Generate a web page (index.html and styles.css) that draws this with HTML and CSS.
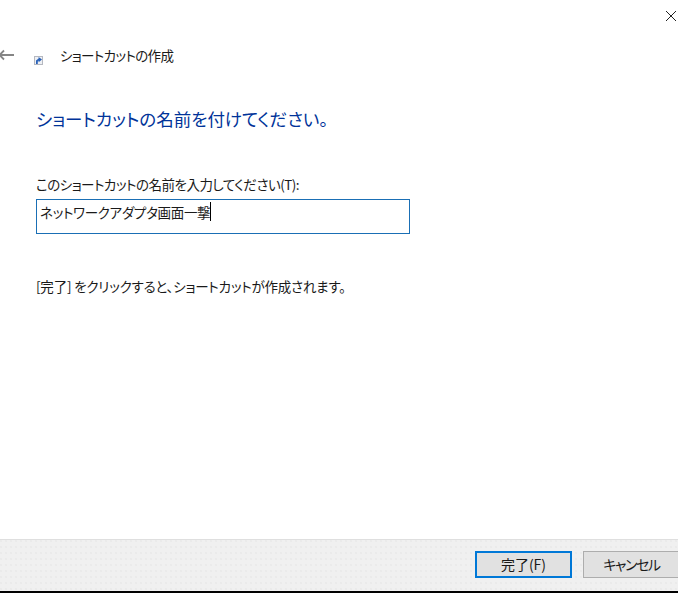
FILE: index.html
```html
<!DOCTYPE html>
<html lang="ja">
<head>
<meta charset="utf-8">
<title>ショートカットの作成</title>
<link rel="stylesheet" href="styles.css">
</head>
<body>
<div class="window">
  <div class="close-row">
    <svg class="close" width="12" height="12" viewBox="0 0 12 12"><path d="M1 1L11 11M11 1L1 11" stroke="#222" stroke-width="1" fill="none"/></svg>
  </div>
  <div class="title-row">
    <svg class="back" width="14" height="12" viewBox="0 0 14 12"><path d="M14 6H0M4 1.5L-0.5 6L4 10.5" stroke="#858585" stroke-width="1.8" fill="none"/></svg>
    <svg class="app-icon" width="9" height="9" viewBox="0 0 9 9"><rect x="0.5" y="0.5" width="8" height="8" fill="#eef0f4" stroke="#b5b8c0"/><path d="M2 8V4.5L4.6 2.6V1L8 3.6L4.6 6.2V4.6L3.8 5.4V8Z" fill="#2a62b8"/></svg>
    <span class="title">ショートカットの作成</span>
  </div>
  <main class="content">
    <h1 class="heading">ショートカットの名前を付けてください。</h1>
    <label class="field-label" for="name">このショートカットの名前を入力してください(T):</label>
    <div class="input" id="name"><span>ネットワークアダプタ画面一撃</span><i class="caret"></i></div>
    <p class="hint">[完了] をクリックすると、ショートカットが作成されます。</p>
  </main>
  <footer class="footer">
    <button class="btn primary">完了(F)</button>
    <button class="btn cancel">キャンセル</button>
  </footer>
</div>
</body>
</html>
```
FILE: styles.css
```css
* { box-sizing: border-box; }
html, body { margin: 0; padding: 0; }
body {
  width: 678px;
  height: 593px;
  overflow: hidden;
  background: #fff;
  font-family: "Noto Sans CJK JP", "Liberation Sans", sans-serif;
  font-feature-settings: "palt";
  color: #1a1a1a;
  font-size: 13.5px;
}
.window {
  height: 593px;
  display: flex;
  flex-direction: column;
  border-bottom: 2px solid #000;
  overflow: hidden;
}
.close-row {
  height: 45px;
  display: flex;
  justify-content: flex-end;
  align-items: flex-start;
  padding: 10px 0 0 0;
}
.close { margin-right: 1px; }
.title-row {
  height: 22px;
  display: flex;
  align-items: center;
}
.back { margin-top: -2px; }
.app-icon { margin-left: 20px; margin-top: 8px; }
.title {
  margin-left: 17px;
  font-size: 13.5px;
  letter-spacing: -0.65px;
  line-height: 22px;
  margin-top: -2px;
}
.content {
  flex: 1;
  padding: 0 0 0 36px;
}
.heading {
  margin: 40px 0 0;
  font-size: 17.5px;
  font-weight: 400;
  line-height: 24px;
  color: #003399;
}
.field-label {
  display: block;
  margin-top: 43px;
  font-size: 13.5px;
  letter-spacing: -0.5px;
  line-height: 20px;
}
.input {
  width: 374px;
  height: 35px;
  margin-top: 5px;
  border: 1px solid #1a6fb5;
  padding: 2px 0 0 3px;
  display: flex;
  align-items: flex-start;
  font-size: 13.5px;
  letter-spacing: -0.3px;
  line-height: 20px;
}
.caret {
  display: block;
  width: 1px;
  height: 19px;
  background: #000;
}
.hint {
  margin: 42px 0 0;
  font-size: 13.5px;
  letter-spacing: -0.2px;
  line-height: 20px;
}
.footer {
  height: 52px;
  background-color: #f0f0f0;
  background-image: radial-gradient(circle at 1px 1px, #e6e6e6 0.5px, transparent 1px);
  background-size: 5px 6px;
  border-top: 1px solid #dfdfdf;
  display: flex;
  align-items: flex-start;
  gap: 11px;
  padding: 11px 0 0 475px;
}
.btn {
  flex: none;
  width: 97px;
  height: 27px;
  background: #e1e1e1;
  border: 1px solid #adadad;
  font: inherit;
  font-size: 14px;
  color: #1a1a1a;
  padding: 0 0 2px;
}
.btn.primary {
  border: 2px solid #0078d7;
}
.btn.cancel {
  letter-spacing: -1.4px;
}
```
